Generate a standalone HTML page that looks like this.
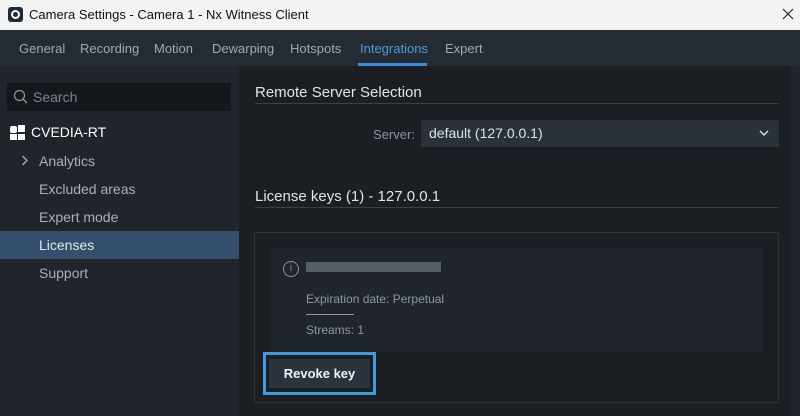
<!DOCTYPE html>
<html><head><style>
*{margin:0;padding:0;box-sizing:border-box}
body{width:800px;height:416px;overflow:hidden;font-family:"Liberation Sans",sans-serif;background:#1b1f24;position:relative;font-size:13px}
.a{position:absolute}
</style></head><body>
<div class="a" style="left:0;top:0;width:800px;height:30px;background:#f3f3f3"></div>
<div class="a" style="left:8px;top:7px;width:15px;height:15px;background:#1e2b3a;border-radius:3px"></div>
<div class="a" style="left:11px;top:10px;width:9px;height:9px;border:2px solid #fff;border-radius:50%"></div>
<div class="a" style="left:29px;top:7px;color:#111;font-size:13px">Camera Settings - Camera 1 - Nx Witness Client</div>
<svg class="a" style="left:381px;top:9px;left:381px" width="0" height="0"></svg>
<svg class="a" style="left:383px;top:0;left:383px" width="0" height="0"></svg>
<svg class="a" style="left:382px;top:8px;left:782px" width="12" height="12"><path d="M1 1L11 11M11 1L1 11" stroke="#222" stroke-width="1.2"/></svg>
<div class="a" style="left:0;top:30px;width:800px;height:36px;background:#252b33"></div>
<div class="a" style="top:41px;left:19px;color:#a0a8b1">General</div>
<div class="a" style="top:41px;left:80px;color:#a0a8b1">Recording</div>
<div class="a" style="top:41px;left:154px;color:#a0a8b1">Motion</div>
<div class="a" style="top:41px;left:212px;color:#a0a8b1">Dewarping</div>
<div class="a" style="top:41px;left:290px;color:#a0a8b1">Hotspots</div>
<div class="a" style="top:41px;left:360px;color:#4a9be0">Integrations</div>
<div class="a" style="top:41px;left:445px;color:#a0a8b1">Expert</div>
<div class="a" style="left:358px;top:63px;width:69px;height:3px;background:#3a8de0"></div>
<div class="a" style="left:0;top:66px;width:239px;height:350px;background:#20252c"></div>
<div class="a" style="left:7px;top:83px;width:224px;height:28px;background:#14181c"></div>
<svg class="a" style="left:13px;top:89px" width="16" height="16"><circle cx="6.5" cy="6.5" r="5" stroke="#8a939c" fill="none" stroke-width="1.3"/><line x1="10" y1="10" x2="14" y2="14" stroke="#8a939c" stroke-width="1.3"/></svg>
<div class="a" style="left:33px;top:89px;color:#7c858f;font-size:14px">Search</div>
<div class="a" style="left:10px;top:126px;width:7px;height:7px;background:#fff;border-radius:2px"></div>
<div class="a" style="left:18px;top:125px;width:7px;height:7px;background:#fff"></div>
<div class="a" style="left:10px;top:134px;width:7px;height:6px;background:#fff"></div>
<div class="a" style="left:18px;top:134px;width:7px;height:6px;background:#fff"></div>
<div class="a" style="left:31px;top:124px;color:#fff;font-size:14px">CVEDIA-RT</div>
<svg class="a" style="left:21px;top:155px" width="8" height="12"><path d="M1.5 1L6 5.5L1.5 10" stroke="#a9b0b8" fill="none" stroke-width="1.3"/></svg>
<div class="a" style="left:39px;top:153px;color:#a9b0b8;font-size:14px">Analytics</div>
<div class="a" style="left:39px;top:181px;color:#a9b0b8;font-size:14px">Excluded areas</div>
<div class="a" style="left:39px;top:209px;color:#a9b0b8;font-size:14px">Expert mode</div>
<div class="a" style="left:0;top:231px;width:239px;height:28px;background:#34506e"></div>
<div class="a" style="left:39px;top:237px;color:#e2e8ee;font-size:14px">Licenses</div>
<div class="a" style="left:39px;top:265px;color:#a9b0b8;font-size:14px">Support</div>
<div class="a" style="left:790px;top:66px;width:10px;height:350px;background:#20252b"></div>
<div class="a" style="left:255px;top:84px;color:#dfe4ea;font-size:15px">Remote Server Selection</div>
<div class="a" style="left:255px;top:103px;width:524px;height:1px;background:#3a4049"></div>
<div class="a" style="left:373px;top:127px;color:#8a939c">Server:</div>
<div class="a" style="left:421px;top:120px;width:358px;height:27px;background:#2a3139"></div>
<div class="a" style="left:429px;top:125px;color:#dfe4ea;font-size:14px">default (127.0.0.1)</div>
<svg class="a" style="left:759px;top:130px" width="10" height="7"><path d="M1 1L5 5L9 1" stroke="#dfe4ea" fill="none" stroke-width="1.4"/></svg>
<div class="a" style="left:255px;top:188px;color:#dfe4ea;font-size:15px">License keys (1) - 127.0.0.1</div>
<div class="a" style="left:255px;top:207px;width:524px;height:1px;background:#3a4049"></div>
<div class="a" style="left:254px;top:232px;width:525px;height:171px;border:1px solid #2d343c"></div>
<div class="a" style="left:270px;top:248px;width:493px;height:104px;background:#20252c"></div>
<div class="a" style="left:283px;top:261px;width:16px;height:16px;border:1px solid #8a939c;border-radius:50%;color:#8a939c;font-size:10px;text-align:center;line-height:14px">i</div>
<div class="a" style="left:306px;top:262px;width:135px;height:10px;background:#6a7079;opacity:.75"></div>
<div class="a" style="left:306px;top:292px;color:#8e97a1;font-size:12px">Expiration date: Perpetual</div>
<div class="a" style="left:306px;top:314px;width:48px;height:1px;background:#8e97a1"></div>
<div class="a" style="left:306px;top:323px;color:#8e97a1;font-size:12px">Streams: 1</div>
<div class="a" style="left:263px;top:352px;width:113px;height:43px;border:3px solid #3b9ee2"></div>
<div class="a" style="left:269px;top:359px;width:101px;height:29px;background:#2c333c;color:#f0f3f6;font-size:13px;font-weight:bold;text-align:center;line-height:29px">Revoke key</div>
</body></html>
